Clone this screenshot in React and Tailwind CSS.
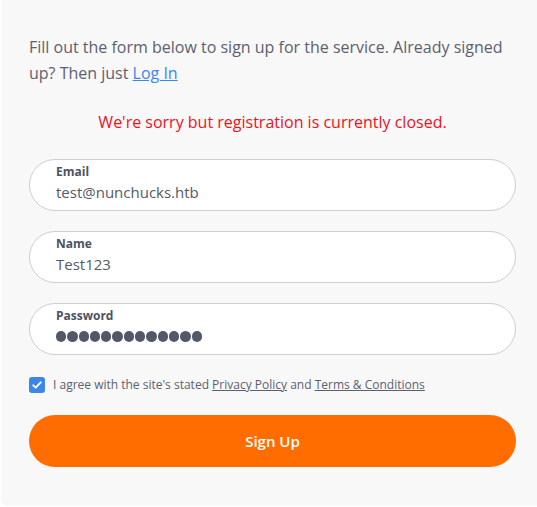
const Field = ({ label, value, dots }) => (
  <div className="h-[52px] rounded-full border border-[#cfcfd4] bg-white pl-[26px] pr-6 pb-[3px] flex flex-col justify-center">
    <span className="text-[12px] font-bold leading-[16px] text-[#4d5263]">{label}</span>
    {dots ? (
      <span className="mt-[2px] h-[22px] flex items-center gap-[1px]" aria-label="password">
        {Array.from({ length: dots }).map((_, i) => (
          <span key={i} className="w-[10.3px] h-[10.3px] rounded-full bg-[#525868]" />
        ))}
      </span>
    ) : (
      <span className="mt-[1px] text-[15px] leading-[22px] text-[#555a66]">{value}</span>
    )}
  </div>
);

const App = () => {
  return (
    <div className="min-h-screen bg-white font-['Open_Sans',sans-serif]">
      <div className="ml-px h-[506px] bg-[#f8f8f8] rounded-bl-[6px] pl-[28px] pr-[21px] pt-[34px]">
        {/* Intro */}
        <p className="text-[16px] leading-[26px] text-[#5d6070]">
          Fill out the form below to sign up for the service. Already signed up? Then just{" "}
          <a href="#" className="text-[#3a86f0] underline">Log In</a>
        </p>

        {/* Error */}
        <p className="mt-[23px] text-center text-[16px] leading-[26px] text-[#f0101e]">
          We're sorry but registration is currently closed.
        </p>

        {/* Fields */}
        <div className="mt-[24px] flex flex-col gap-[20px]">
          <Field label="Email" value="test@nunchucks.htb" />
          <Field label="Name" value="Test123" />
          <Field label="Password" dots={13} />
        </div>

        {/* Terms */}
        <label className="mt-[21px] flex items-center gap-[8px] text-[12px] text-[#5d6070]">
          <span className="w-4 h-4 rounded-[3px] bg-[#3b86e8] flex items-center justify-center">
            <svg viewBox="0 0 16 16" className="w-3 h-3" fill="none" stroke="white" strokeWidth="2.6" strokeLinecap="round" strokeLinejoin="round">
              <path d="M3 8.5l3.2 3L13 4.5" />
            </svg>
          </span>
          <span>
            I agree with the site's stated <a href="#" className="underline">Privacy Policy</a> and{" "}
            <a href="#" className="underline">Terms &amp; Conditions</a>
          </span>
        </label>

        {/* Submit */}
        <button className="mt-[21px] w-full h-[52px] rounded-full bg-[#ff6d00] text-white text-[15px] font-semibold">
          Sign Up
        </button>
      </div>
    </div>
  );
};

export default App;
